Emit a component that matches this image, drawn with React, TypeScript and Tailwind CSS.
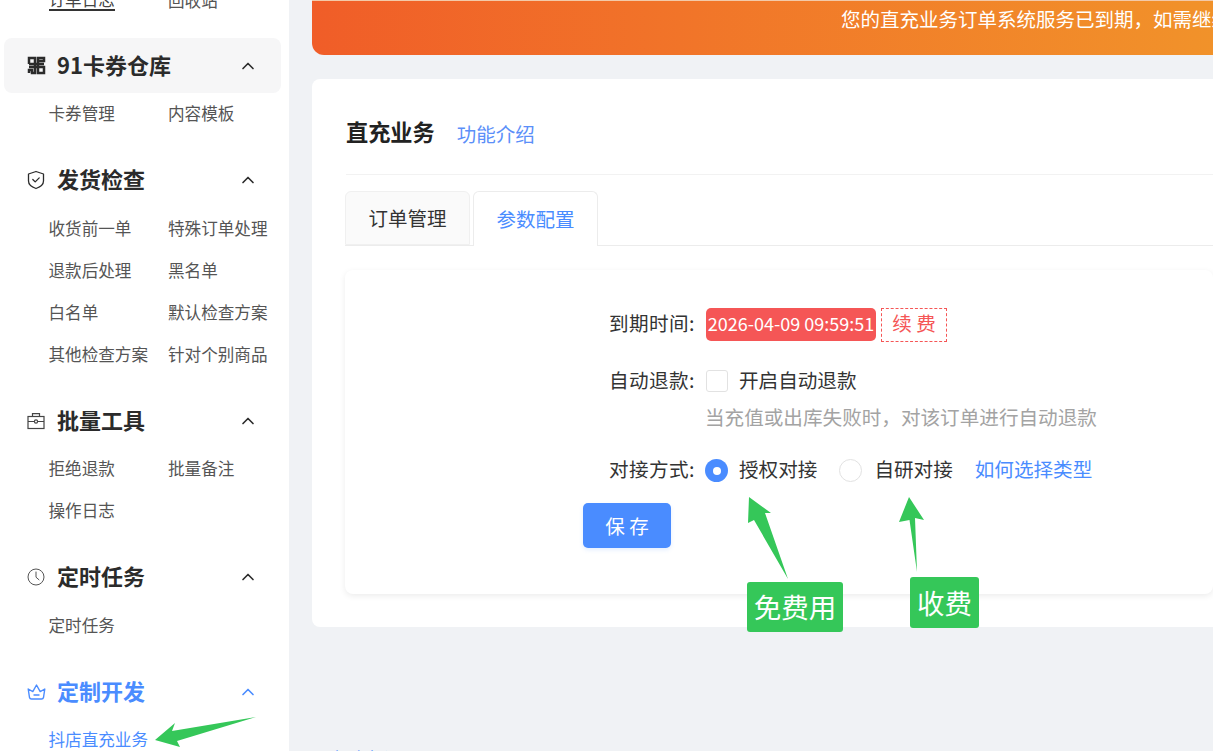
import { ChevronUp } from 'lucide-react';

const font = { fontFamily: '"Noto Sans CJK SC", sans-serif' };

function GridIcon() {
  return (
    <svg width="19" height="19" viewBox="0 0 19 19" fill="none" stroke="currentColor" strokeWidth="2.5">
      <path d="M2 8V2h6v6H2M11 2h6v3h-6zM11 5v3h6M2 11h6v6H5v-3H2v3M11 11h6v6h-6zM8 8h3v3H8z" />
    </svg>
  );
}

function ShieldIcon() {
  return (
    <svg width="18" height="20" viewBox="0 0 18 20" fill="none" stroke="currentColor" strokeWidth="1.3">
      <path d="M9 1.5 16.5 4v7c0 3.6-3.2 6-7.5 7.5C4.7 17 1.5 14.6 1.5 11V4z" strokeLinejoin="round" />
      <path d="m5.8 9.5 2.4 2.4 4-4" strokeLinecap="round" strokeLinejoin="round" />
    </svg>
  );
}

function CaseIcon() {
  return (
    <svg width="18" height="18" viewBox="0 0 18 18" fill="none" stroke="#444" strokeWidth="1.2">
      <rect x="1" y="4.5" width="16" height="12" />
      <path d="M5.5 4.5V1.6h7v2.9M1 9.5h16" />
      <circle cx="9" cy="9.5" r="1.6" fill="#fff" />
    </svg>
  );
}

function ClockIcon() {
  return (
    <svg width="18" height="18" viewBox="0 0 18 18" fill="none" stroke="#555" strokeWidth="1">
      <circle cx="9" cy="9" r="8" />
      <path d="M9 4v5.2l3 2.6" strokeLinecap="round" />
    </svg>
  );
}

function CrownIcon() {
  return (
    <svg width="19" height="18" viewBox="0 0 19 18" fill="none" stroke="currentColor" strokeWidth="1.4">
      <path d="M1.2 6 5.8 8.6 9.5 2l3.7 6.6L17.8 6l-1.3 8.5a2 2 0 0 1-2 1.5h-10a2 2 0 0 1-2-1.5z" strokeLinejoin="round" />
      <path d="M7 12h5" strokeLinecap="round" />
    </svg>
  );
}

type Group = {
  title: string;
  icon: React.ReactNode;
  items: string[];
  active?: boolean;
  hover?: boolean;
};

const groups: Group[] = [
  { title: '91卡券仓库', icon: <GridIcon />, items: ['卡券管理', '内容模板'], hover: true },
  { title: '发货检查', icon: <ShieldIcon />, items: ['收货前一单', '特殊订单处理', '退款后处理', '黑名单', '白名单', '默认检查方案', '其他检查方案', '针对个别商品'] },
  { title: '批量工具', icon: <CaseIcon />, items: ['拒绝退款', '批量备注', '操作日志'] },
  { title: '定时任务', icon: <ClockIcon />, items: ['定时任务'] },
  { title: '定制开发', icon: <CrownIcon />, items: ['抖店直充业务'], active: true },
];

function Sidebar() {
  return (
    <aside className="w-[289px] shrink-0 overflow-hidden bg-white">
      <div className="-mt-[21px]">
        <div className="mb-[17px] grid h-[42px] grid-cols-[119.5px_1fr] items-center pl-[48.5px] text-[16.6px] text-[#555]">
          <span className="w-fit border-b-2 border-[#333] leading-[20px] text-[#444]">订单日志</span>
          <span>回收站</span>
        </div>
        {groups.map((g) => (
          <div key={g.title} className="mb-[17.5px]">
            <div
              className={`mx-1 flex h-[55px] w-[277px] items-center rounded-lg pl-[23px] pr-[23px] ${g.hover ? 'bg-[#f6f6f7]' : ''} ${g.active ? 'text-[#4a8cff]' : 'text-[#2b2b2b]'}`}
            >
              <span className="flex w-[30px] shrink-0 items-center">{g.icon}</span>
              <span className="flex-1 pb-[3px] text-[22px] font-bold">{g.title}</span>
              <ChevronUp size={20} strokeWidth={2} />
            </div>
            <div className="grid grid-cols-[119.5px_1fr] pl-[48.5px] text-[16.6px]">
              {g.items.map((item) => (
                <div key={item} className={`flex h-[42px] items-center pb-[1px] whitespace-nowrap ${g.active ? 'text-[#4a8cff]' : 'text-[#555]'}`}>
                  {item}
                </div>
              ))}
            </div>
          </div>
        ))}
      </div>
    </aside>
  );
}

function Form() {
  return (
    <div className="mb-[33px] ml-[33px] h-[324px] rounded-lg bg-white shadow-[0_2px_6px_rgba(0,0,0,0.08)]">
      <div className="pl-[264px] pt-[38px] text-[19.6px] whitespace-nowrap text-[#333]">
        <div className="flex h-[33px] items-center">
          <span className="w-[97px] shrink-0 pb-[3px] tracking-[0.4px]">到期时间:</span>
          <span className="flex h-[33px] w-[170px] items-center justify-center rounded-[5px] bg-[#f55656] pb-[3px] text-[18px] text-white">2026-04-09 09:59:51</span>
          <span className="ml-[5px] flex h-[34px] w-[66px] items-center justify-center border border-dashed border-[#f55656] pb-[3px] text-[#f55656]">续 费</span>
        </div>
        <div className="mt-[23px] flex h-[33px] items-center">
          <span className="w-[97px] shrink-0 pb-[2px] tracking-[0.4px]">自动退款:</span>
          <span className="h-[22px] w-[22px] rounded-[3px] border border-[#e2e2e2] bg-white" />
          <span className="ml-[11px] pb-[2px]">开启自动退款</span>
        </div>
        <div className="mt-[5px] h-[33px] pl-[96px] leading-[29px] text-[#a3a3a3]">当充值或出库失败时，对该订单进行自动退款</div>
        <div className="mt-[19px] flex h-[33px] items-center">
          <span className="w-[96px] shrink-0 pb-[3px] tracking-[0.4px]">对接方式:</span>
          <span className="flex h-[23px] w-[23px] items-center justify-center rounded-full bg-[#4a8cff]">
            <span className="h-[8px] w-[8px] rounded-full bg-white" />
          </span>
          <span className="ml-[11px] pb-[3px]">授权对接</span>
          <span className="ml-[22px] h-[23px] w-[23px] rounded-full border border-[#e2e2e2] bg-white" />
          <span className="ml-[12px] pb-[3px]">自研对接</span>
          <span className="ml-[22px] pb-[3px] text-[#4a8cff]">如何选择类型</span>
        </div>
      </div>
      <button className="ml-[238px] mt-[16px] flex h-[45px] w-[88px] items-center justify-center rounded-[5px] bg-[#4a8cff] text-[19.5px] text-white shadow-[0_2px_4px_rgba(74,140,255,0.15)]">
        保 存
      </button>
    </div>
  );
}

function Main() {
  return (
    <main className="relative flex min-w-0 flex-1 flex-col overflow-hidden bg-[#f0f2f5] pl-[23px]">
      <div className="h-[55px] shrink-0 rounded-bl-xl border-t border-[#f3c9a8] bg-gradient-to-r from-[#f05d28] to-[#f1922a] pl-[529px] pt-[4px] text-[19.5px] leading-[28px] whitespace-nowrap text-white">
        您的直充业务订单系统服务已到期，如需继续使用请及时续费
      </div>
      <section className="mt-[24px] h-[548px] shrink-0 rounded-l-lg bg-white">
        <div className="ml-[34px] flex h-[96px] items-center border-b border-[#f2f2f2] pt-[13px]">
          <h1 className="pb-[2px] text-[22.2px] font-bold text-[#222]">直充业务</h1>
          <a className="ml-[22px] pt-[2px] text-[19.5px] text-[#5b8ff9]">功能介绍</a>
        </div>
        <div className="ml-[33px] mt-[16px] flex h-[55px] items-end gap-[3px] border-b border-[#ececec]">
          <div className="flex h-[54px] w-[125px] items-center justify-center rounded-t-md border border-[#f0f0f0] bg-[#fafafa] text-[19.5px] text-[#333]">订单管理</div>
          <div className="-mb-px flex h-[55px] w-[125px] items-center justify-center rounded-t-md border border-b-0 border-[#ececec] bg-white text-[19.5px] text-[#4a8cff]">参数配置</div>
        </div>
        <div className="pt-[24px]">
          <Form />
        </div>
      </section>
      <div className="mt-[119px] shrink-0 pl-[20px] text-[16px] leading-[22px] text-[#4a8cff]">帮助中心</div>
    </main>
  );
}

// green annotations pasted over the screenshot
function Annotations() {
  return (
    <>
      <svg className="pointer-events-none absolute left-0 top-0" width="1213" height="751" fill="#35c759">
        <polygon points="749,497 771,513 765,513 788,579 754,520 748,523" />
        <polygon points="909,497 924,520 915,518 917,572 909.5,520 899,522" />
        <polygon points="155,740 175,723 172,731 256,717 177,741 180,747" />
      </svg>
      <div className="absolute left-[747px] top-[582px] flex h-[50px] w-[96px] items-center justify-center rounded-[3px] bg-[#35c759] text-[27.5px] text-white">免费用</div>
      <div className="absolute left-[910px] top-[577px] flex h-[51px] w-[69px] items-center justify-center rounded-[3px] bg-[#35c759] text-[27.5px] text-white">收费</div>
    </>
  );
}

export default function App() {
  return (
    <div className="relative flex h-[751px] w-[1213px] overflow-hidden bg-[#f0f2f5]" style={font}>
      <Sidebar />
      <Main />
      <Annotations />
    </div>
  );
}
